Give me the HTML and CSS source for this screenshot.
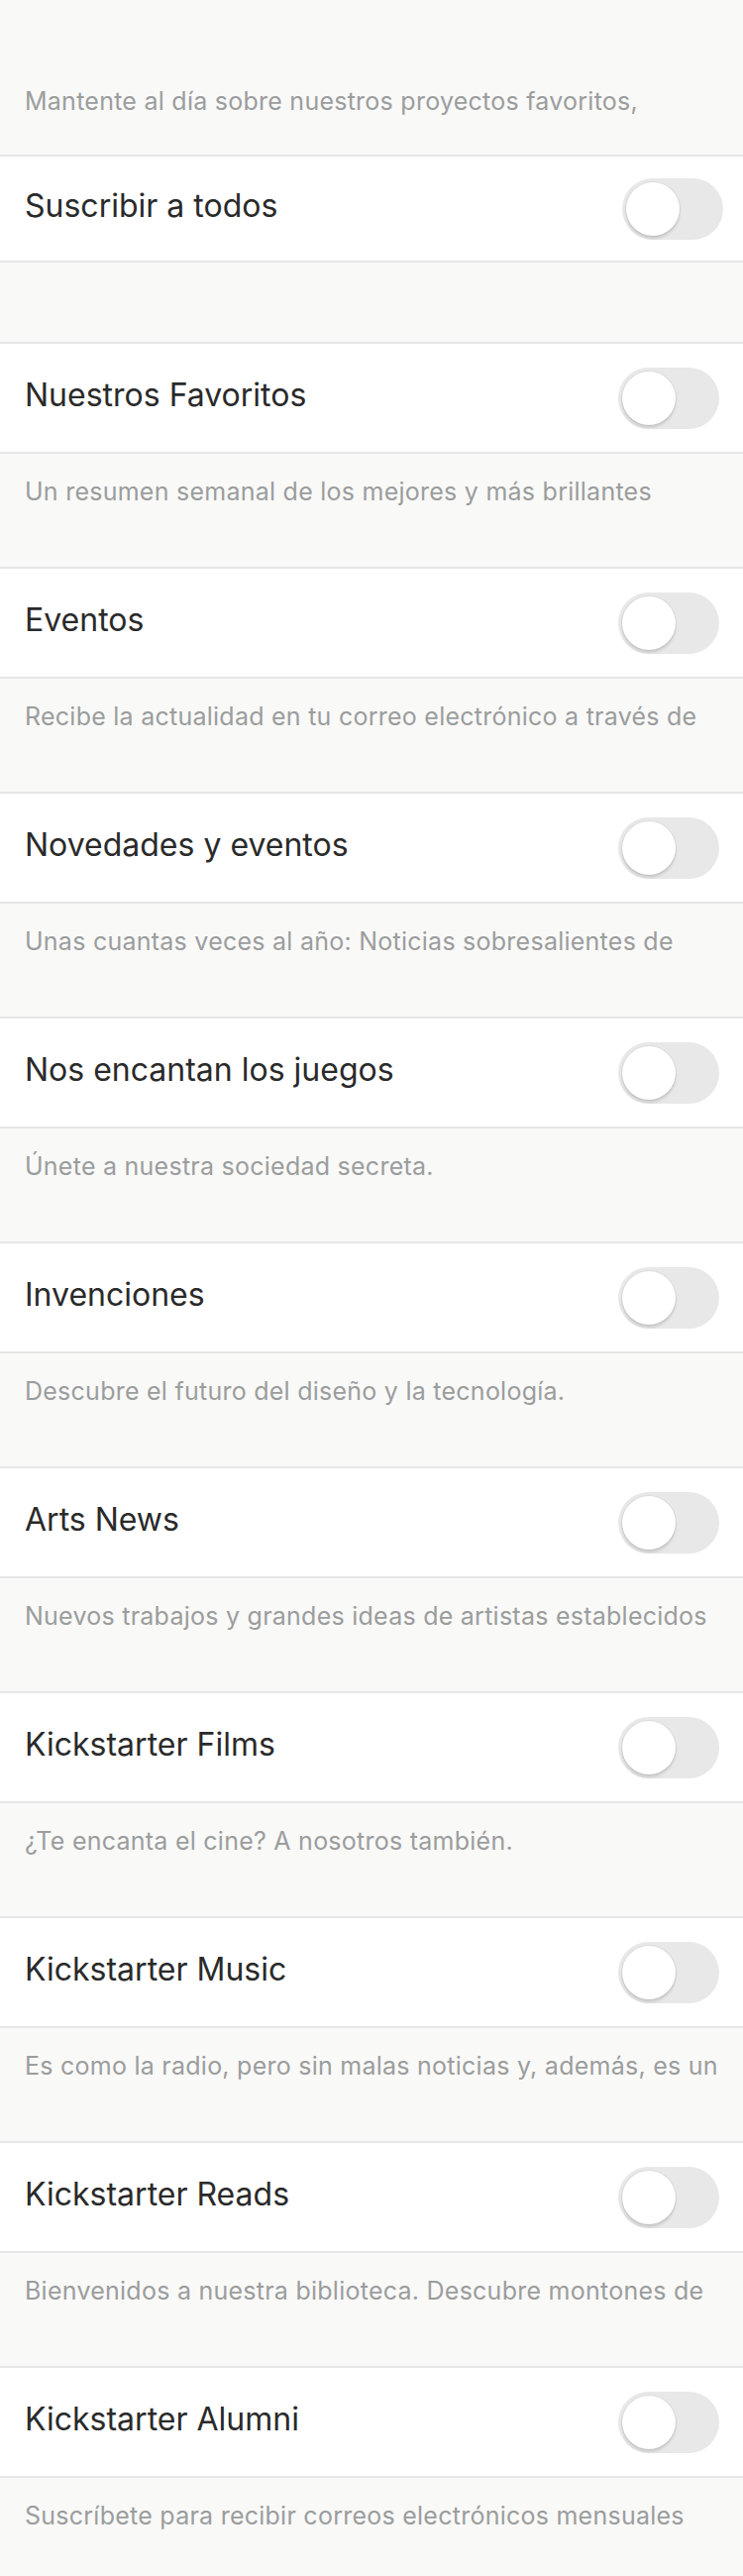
FILE: index.html
```
<!DOCTYPE html>
<html lang="es">
<head>
<meta charset="utf-8">
<title>Boletines</title>
<link rel="stylesheet" href="styles.css">
</head>
<body>
<div class="page">
  <div class="intro">
    <p class="desc-text">Mantente al día sobre nuestros proyectos favoritos,</p>
  </div>
  <div class="row row-first">
    <span class="title">Suscribir a todos</span>
    <span class="toggle"><span class="knob"></span></span>
  </div>
  <div class="gap"></div>

  <div class="row"><span class="title">Nuestros Favoritos</span><span class="toggle"><span class="knob"></span></span></div>
  <div class="desc"><p class="desc-text">Un resumen semanal de los mejores y más brillantes</p></div>

  <div class="row"><span class="title">Eventos</span><span class="toggle"><span class="knob"></span></span></div>
  <div class="desc"><p class="desc-text">Recibe la actualidad en tu correo electrónico a través de</p></div>

  <div class="row"><span class="title">Novedades y eventos</span><span class="toggle"><span class="knob"></span></span></div>
  <div class="desc"><p class="desc-text">Unas cuantas veces al año: Noticias sobresalientes de</p></div>

  <div class="row"><span class="title">Nos encantan los juegos</span><span class="toggle"><span class="knob"></span></span></div>
  <div class="desc"><p class="desc-text">Únete a nuestra sociedad secreta.</p></div>

  <div class="row"><span class="title">Invenciones</span><span class="toggle"><span class="knob"></span></span></div>
  <div class="desc"><p class="desc-text">Descubre el futuro del diseño y la tecnología.</p></div>

  <div class="row"><span class="title">Arts News</span><span class="toggle"><span class="knob"></span></span></div>
  <div class="desc"><p class="desc-text">Nuevos trabajos y grandes ideas de artistas establecidos</p></div>

  <div class="row"><span class="title">Kickstarter Films</span><span class="toggle"><span class="knob"></span></span></div>
  <div class="desc"><p class="desc-text">¿Te encanta el cine? A nosotros también.</p></div>

  <div class="row"><span class="title">Kickstarter Music</span><span class="toggle"><span class="knob"></span></span></div>
  <div class="desc"><p class="desc-text">Es como la radio, pero sin malas noticias y, además, es un</p></div>

  <div class="row"><span class="title">Kickstarter Reads</span><span class="toggle"><span class="knob"></span></span></div>
  <div class="desc"><p class="desc-text">Bienvenidos a nuestra biblioteca. Descubre montones de</p></div>

  <div class="row"><span class="title">Kickstarter Alumni</span><span class="toggle"><span class="knob"></span></span></div>
  <div class="desc"><p class="desc-text">Suscríbete para recibir correos electrónicos mensuales</p></div>
</div>
</body>
</html>
```

FILE: styles.css
```
html, body {
  margin: 0;
  padding: 0;
  background: #f9f9f8;
}

.page {
  width: 750px;
  font-family: Inter, "Liberation Sans", sans-serif;
}

.intro {
  height: 156px;
  padding: 87px 20px 0 25px;
  box-sizing: border-box;
}

.desc-text {
  margin: 0;
  font-size: 25px;
  line-height: 30px;
  letter-spacing: 0.25px;
  color: #9b9d9d;
  white-space: nowrap;
  overflow: hidden;
}

.row {
  display: flex;
  align-items: center;
  justify-content: space-between;
  height: 109px;
  padding: 0 24px 0 25px;
  background: #ffffff;
  border-top: 2px solid #e6e6e6;
  border-bottom: 2px solid #e6e6e6;
}

.row-first {
  height: 105px;
  padding-right: 20px;
}

.title {
  font-size: 32px;
  line-height: 38px;
  color: #2a2a2a;
  margin-bottom: 6px;
}

.gap {
  height: 80px;
}

.desc {
  height: 114px;
  padding: 23px 20px 0 25px;
  box-sizing: border-box;
}

.toggle {
  display: flex;
  align-items: center;
  width: 102px;
  height: 62px;
  box-sizing: border-box;
  border-radius: 31px;
  background: #e8e8e9;
  padding: 0 4px;
}

.knob {
  width: 54px;
  height: 54px;
  border-radius: 50%;
  background: #ffffff;
  box-shadow: 0 0 0 1px rgba(0, 0, 0, 0.05), 0 3px 3px rgba(0, 0, 0, 0.12);
}
```
